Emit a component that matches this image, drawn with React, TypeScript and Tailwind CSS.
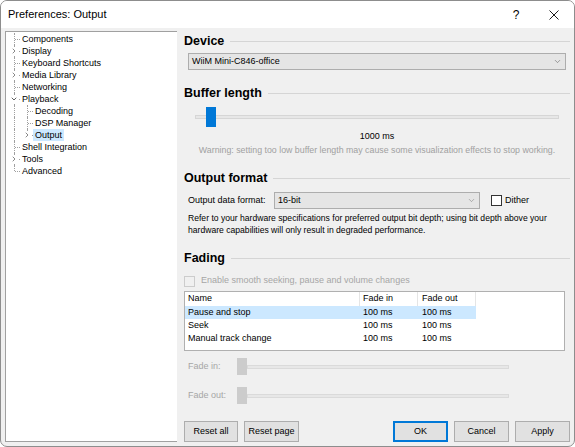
import { ChevronDown, ChevronRight } from 'lucide-react';

type TreeNode = { label: string; depth: number; expander?: 'open' | 'closed'; last?: boolean; selected?: boolean };

const tree: TreeNode[] = [
  { label: 'Components', depth: 0 },
  { label: 'Display', depth: 0, expander: 'closed' },
  { label: 'Keyboard Shortcuts', depth: 0 },
  { label: 'Media Library', depth: 0, expander: 'closed' },
  { label: 'Networking', depth: 0 },
  { label: 'Playback', depth: 0, expander: 'open' },
  { label: 'Decoding', depth: 1 },
  { label: 'DSP Manager', depth: 1 },
  { label: 'Output', depth: 1, expander: 'closed', last: true, selected: true },
  { label: 'Shell Integration', depth: 0 },
  { label: 'Tools', depth: 0, expander: 'closed' },
  { label: 'Advanced', depth: 0, last: true },
];

const fadeRows = [
  { name: 'Pause and stop', fin: '100 ms', fout: '100 ms', selected: true },
  { name: 'Seek', fin: '100 ms', fout: '100 ms' },
  { name: 'Manual track change', fin: '100 ms', fout: '100 ms' },
];

// one indent cell of the tree: dotted vertical + horizontal connector, optional expander
const TreeCell = ({ half, branch, expander }: { half?: boolean; branch?: boolean; expander?: 'open' | 'closed' }) => (
  <div className="relative w-[13px] h-[12px] shrink-0">
    <div className={`absolute left-[8px] top-0 w-0 border-l border-dotted border-[#a0a0a0] ${half ? 'h-[6px]' : 'h-[12px]'}`} />
    {branch && <div className="absolute left-[9px] top-[6px] w-[5px] h-0 border-t border-dotted border-[#a0a0a0]" />}
    {expander && (
      <div className="absolute left-[4px] top-[2px] w-[8px] h-[8px] bg-white flex items-center justify-center">
        {expander === 'open' ? (
          <ChevronDown className="w-[8px] h-[8px] text-[#404040]" strokeWidth={2.5} />
        ) : (
          <ChevronRight className="w-[8px] h-[8px] text-[#707070]" strokeWidth={2.5} />
        )}
      </div>
    )}
  </div>
);

const Heading = ({ title, className = '' }: { title: string; className?: string }) => (
  <div className={`flex items-center gap-[6px] h-[14px] ${className}`}>
    <span className="text-[12.5px] font-bold text-black leading-none">{title}</span>
    <div className="flex-1 h-0 border-t border-[#d5d5d5]" />
  </div>
);

const Button = ({ label, primary }: { label: string; primary?: boolean }) => (
  <div
    className={`w-[55px] h-[21px] flex items-center justify-center bg-[#e1e1e1] text-[9px] text-black ${
      primary ? 'border-2 border-[#0078d7]' : 'border border-[#adadad]'
    }`}
  >
    {label}
  </div>
);

const DisabledSlider = ({ label, className = '' }: { label: string; className?: string }) => (
  <div className={`flex items-center h-[17px] ${className}`}>
    <span className="w-[53px] pl-[4px] text-[9px] text-[#a6a6a6]">{label}</span>
    <div className="w-[10px] h-[17px] bg-[#cccccc]" />
    <div className="w-[262px] h-[4px] bg-[#e7e7e7] border border-[#dadada]" />
  </div>
);

export default function App() {
  return (
    <div
      className="w-[575px] h-[447px] bg-[#f0f0f0] border border-[#8d8d8d] rounded-[7px] overflow-hidden flex flex-col"
      style={{ fontFamily: '"Liberation Sans", Arial, sans-serif' }}
    >
      {/* title bar */}
      <div className="h-[27px] bg-white flex items-center shrink-0">
        <span className="pl-[7px] text-[11px] text-black flex-1">Preferences: Output</span>
        <span className="w-[34px] text-center text-[12px] text-black mr-[4px]">?</span>
        <div className="w-[34px] flex justify-center mr-[3px]">
          <svg width="10" height="10" viewBox="0 0 10 10">
            <path d="M0.5 0.5 L9.5 9.5 M9.5 0.5 L0.5 9.5" stroke="#1a1a1a" strokeWidth="1" />
          </svg>
        </div>
      </div>

      <div className="flex flex-1 pl-[4px] pt-[3px] pb-[4px]">
        {/* tree */}
        <div className="w-[172px] bg-white border border-[#a0a0a0] border-r-0 pt-[1px]">
          {tree.map((n, i) => (
            <div key={i} className="flex items-center h-[12px]">
              <TreeCell
                half={n.depth === 0 && n.last}
                branch={n.depth === 0}
                expander={n.depth === 0 ? n.expander : undefined}
              />
              {n.depth === 1 && <TreeCell half={n.last} branch expander={n.expander} />}
              <span
                className={`text-[9px] leading-[12px] px-[2px] ml-[1px] ${
                  n.selected ? 'bg-[#cce8ff]' : ''
                } text-black whitespace-nowrap`}
              >
                {n.label}
              </span>
            </div>
          ))}
        </div>

        {/* page */}
        <div className="w-[386px] ml-[7px] pt-[3px] flex flex-col">
          <Heading title="Device" />
          <div className="mt-[5px] ml-[4px] w-[378px] h-[17px] bg-[#e5e5e5] border border-[#adadad] flex items-center justify-between px-[3px]">
            <span className="text-[9px] text-black">WiiM Mini-C846-office</span>
            <ChevronDown className="w-[9px] h-[9px] text-[#606060]" strokeWidth={1.5} />
          </div>

          <Heading title="Buffer length" className="mt-[16px]" />
          <div className="mt-[7px] ml-[11px] w-[364px] h-[20px] flex items-center relative">
            <div className="w-full h-[4px] bg-[#e7e7e7] border border-[#d6d6d6]" />
            <div className="absolute left-[11px] top-0 w-[10px] h-[20px] bg-[#0078d7]" />
          </div>
          <div className="mt-[3px] text-center text-[9px] leading-[12px] text-black">1000 ms</div>
          <div className="mt-[2px] text-center text-[8.8px] leading-[12px] text-[#a0a0a0] whitespace-nowrap">
            Warning: setting too low buffer length may cause some visualization effects to stop working.
          </div>

          <Heading title="Output format" className="mt-[15px]" />
          <div className="mt-[7px] ml-[4px] flex items-center h-[17px]">
            <span className="w-[86px] text-[9px] text-black">Output data format:</span>
            <div className="w-[206px] h-[17px] bg-[#e5e5e5] border border-[#adadad] flex items-center justify-between px-[3px]">
              <span className="text-[9px] text-black">16-bit</span>
              <ChevronDown className="w-[9px] h-[9px] text-[#808080]" strokeWidth={1.5} />
            </div>
            <div className="ml-[11px] w-[11px] h-[11px] bg-white border border-[#333333]" />
            <span className="ml-[3px] text-[9px] text-black">Dither</span>
          </div>
          <div className="mt-[3px] ml-[4px] text-[8.6px] leading-[12px] text-black whitespace-nowrap">
            Refer to your hardware specifications for preferred output bit depth; using bit depth above your
            <br />
            hardware capabilities will only result in degraded performance.
          </div>

          <Heading title="Fading" className="mt-[15px]" />
          <div className="mt-[10px] flex items-center h-[12px]">
            <div className="w-[11px] h-[11px] bg-[#f0f0f0] border border-[#cccccc]" />
            <span className="ml-[6px] text-[9px] text-[#a6a6a6]">Enable smooth seeking, pause and volume changes</span>
          </div>

          <div className="mt-[4px] w-[381px] h-[60px] bg-white border border-[#b0b0b0] flex flex-col text-[9px] text-black">
            <div className="flex h-[14px] items-center">
              <span className="w-[175px] pl-[3px] h-full flex items-center border-r border-[#e5e5e5]">Name</span>
              <span className="w-[58px] pl-[3px] h-full flex items-center border-r border-[#e5e5e5]">Fade in</span>
              <span className="w-[58px] pl-[4px] h-full flex items-center border-r border-[#e5e5e5]">Fade out</span>
            </div>
            {fadeRows.map((r, i) => (
              <div key={i} className="flex h-[13px] items-center">
                <div className={`flex h-full items-center w-[291px] ${r.selected ? 'bg-[#cce8ff]' : ''}`}>
                  <span className="w-[175px] pl-[3px]">{r.name}</span>
                  <span className="w-[58px] pl-[3px]">{r.fin}</span>
                  <span className="w-[58px] pl-[4px]">{r.fout}</span>
                </div>
              </div>
            ))}
          </div>

          <DisabledSlider label="Fade in:" className="mt-[7px]" />
          <DisabledSlider label="Fade out:" className="mt-[12px]" />

          <div className="mt-[17px] flex">
            <Button label="Reset all" />
            <div className="ml-[6px]">
              <Button label="Reset page" />
            </div>
            <div className="ml-[94px] flex gap-[6px]">
              <Button label="OK" primary />
              <Button label="Cancel" />
              <Button label="Apply" />
            </div>
          </div>
        </div>
      </div>
    </div>
  );
}
